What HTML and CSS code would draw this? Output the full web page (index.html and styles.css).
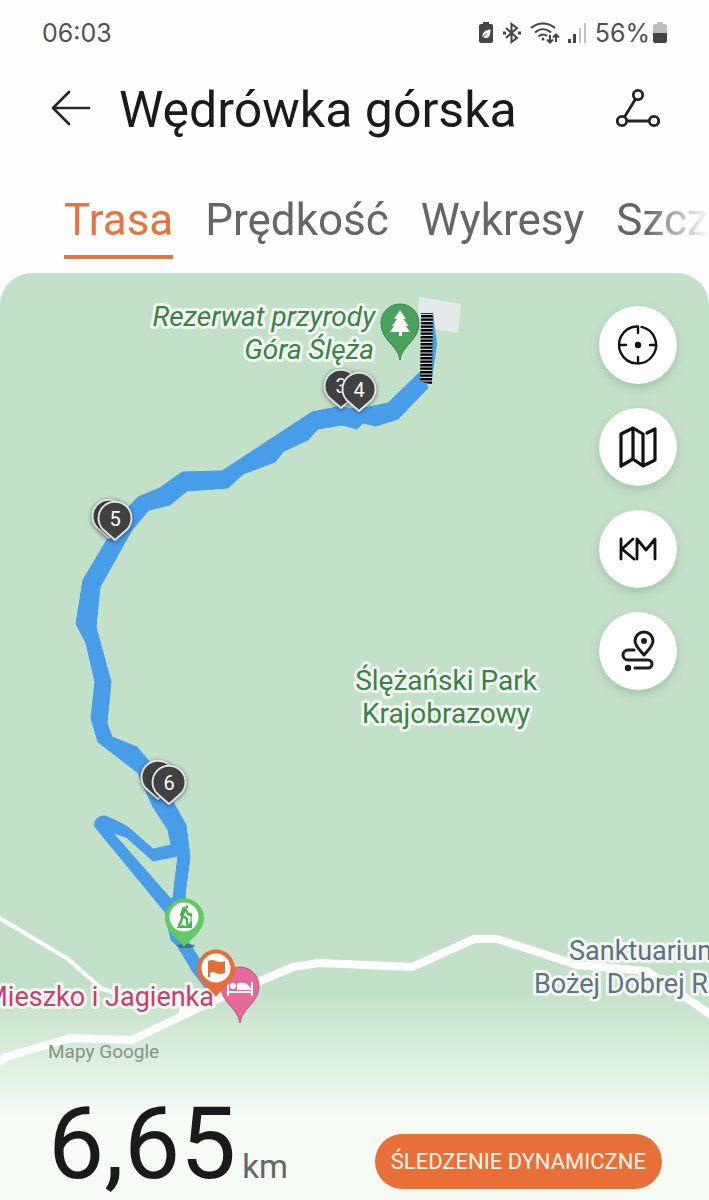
FILE: index.html
```
<!DOCTYPE html>
<html lang="pl">
<head>
    <meta charset="UTF-8">
    <meta name="viewport" content="width=device-width, initial-scale=1">
    <title>Wędrówka górska</title>
    <link rel="stylesheet" href="styles.css">
</head>
<body>
<div class="status">
    <span class="time">06:03</span>
    <div class="status-icons">
        <svg width="16" height="22" viewBox="0 0 16 22">
            <path fill="#444" d="M5 0h6v2h2a2 2 0 0 1 2 2v15a2 2 0 0 1-2 2H3a2 2 0 0 1-2-2V4a2 2 0 0 1 2-2h2z"/>
            <path fill="#fff" d="M12.500 7.500c0 6-1.500 8.500-5 8.500-1.500 0-2.500-.5-3-1.200-.5-3.800 2-6.800 8-7.300z"/>
            <path fill="none" stroke="#444" d="M3.500 16.500l5.500-5"/>
        </svg>
        <svg width="20" height="22" viewBox="0 0 20 22" fill="none" stroke="#444" stroke-width="2">
            <path d="M4 6l11 10-5.500 4V2L15 6 4 16"/>
            <path stroke-width="3" d="M1 11h3M16 11h3"/>
        </svg>
        <svg width="30" height="22" viewBox="0 0 30 22" fill="none" stroke="#444" stroke-width="2">
            <path d="M1 6c7-6 17-6 24 0M5 10.500c5-4.500 11-4.500 16 0M8.500 14.500c3-2.500 6-2.500 8.500-.5"/>
            <circle cx="13" cy="17" r="1.500" fill="#444" stroke="none"/>
            <path d="M20 13v7M17 17.500l3 3 3-3M26 20v-7M23 15.500l3-3 3 3"/>
        </svg>
        <svg width="19" height="22" viewBox="0 0 19 22">
            <path fill="#444" d="M0 17h3v4H0zM5 12h3v9H5z"/>
            <path fill="#c4c4c4" d="M11 6h2v15h-2zM16 1h2v20h-2z"/>
        </svg>
        <span class="percent">56%</span>
        <svg width="16" height="22" viewBox="0 0 16 22">
            <path fill="#bdbdbd" d="M5 0h6v2h2a2 2 0 0 1 2 2v7H1V4a2 2 0 0 1 2-2h2z"/>
            <path fill="#444" d="M1 11h14v8a2 2 0 0 1-2 2H3a2 2 0 0 1-2-2z"/>
        </svg>
    </div>
</div>

<header class="header">
    <button class="icon-btn" type="button" aria-label="Wstecz">
        <svg width="40" height="38" viewBox="0 0 40 38" fill="none" stroke="#262626" stroke-width="2.600" stroke-linecap="round" stroke-linejoin="round">
            <path d="M18 3L2 19l16 16M2 19h36"/>
        </svg>
    </button>
    <h1>Wędrówka górska</h1>
    <button class="icon-btn" type="button" aria-label="Udostępnij">
        <svg width="44" height="40" viewBox="0 0 44 40" fill="none" stroke="#222" stroke-width="2.800">
            <circle cx="22" cy="7" r="4.700"/>
            <circle cx="6" cy="33" r="4.700"/>
            <circle cx="38" cy="33" r="4.700"/>
            <path d="M19.500 11L8.500 29M11 33h22"/>
        </svg>
    </button>
</header>

<nav class="tabs">
    <a href="#trasa" class="active">Trasa</a>
    <a href="#predkosc">Prędkość</a>
    <a href="#wykresy">Wykresy</a>
    <a href="#szczegoly">Szczegóły</a>
</nav>

<main class="map" id="trasa">
    <svg class="map-canvas" viewBox="0 273 709 927" preserveAspectRatio="xMidYMin slice">
        <defs>
            <linearGradient id="fade" x1="0" y1="0" x2="0" y2="1">
                <stop offset="0" stop-color="#f6fbf6" stop-opacity="0"/>
                <stop offset=".45" stop-color="#f6fbf6" stop-opacity=".4"/>
                <stop offset="1" stop-color="#f6fbf6"/>
            </linearGradient>
            <pattern id="hatch" width="14" height="3.500" patternUnits="userSpaceOnUse">
                <path fill="#000" d="M0 0h14v2.500H0z"/>
                <path fill="#dfe6ee" d="M0 2.500h14v1H0z"/>
            </pattern>
            <path id="km-pin" d="M0 22L-12 11.500A16.500 16.500 0 1 1 12 11.500z"/>
        </defs>

        <!-- drogi -->
        <g fill="none" stroke="#fff" stroke-linejoin="round">
            <path stroke-width="4" d="M-4 916L68 959l34 30 14 4"/>
            <path stroke-width="8" d="M-6 1066l12-9 64-19 62 2 81-39 80-34 26-4 93 4 62-28h23l80 26 70 6 70 48"/>
        </g>
        <path fill="#fff" d="M179 1006l16-3v6l-16 5z"/>
        <path fill="url(#fade)" d="M-700 992h2100v125H-700z"/>
        <path fill="#f6fbf6" d="M-700 1117h2100v900H-700z"/>

        <path fill="#e4e9e9" d="M419 297l42 7-3 29-41-7z"/>

        <!-- trasa -->
        <g fill="#489de8">
            <path fill-rule="evenodd" stroke="#489de8" stroke-linejoin="round" d="M421 371L388 403 359 409 337 407 312 412 222 471 182 472 160 488 138 497 123 513 105 543 83 580 76 624 86 643 95 682 91 718 98 742 138 773 153 807 168 830 171 845 153 849 128 827Q108 816 104 816Q93 817 95 827L165 912 171 940 178 947 193 972 206 989 216 985 188 941 185 895 190 857 186 825 172 800 148 760 137 747 112 737 107 723 111 682 96 627 100 587 132 530 149 510 170 505 187 491 228 488 243 474 275 462 284 451 308 440 318 429 342 425 357 429 363 423 376 426 398 419 428 388zM113 833L126 837 153 861 178 856 173 897 171 899z"/>
            <path d="M433 312l4 32-5 36h-6z"/>
        </g>
        <path fill="url(#hatch)" d="M421 313h12l-1 72-12-4z"/>

        <g class="place">
            <text class="green italic" x="375" y="326" text-anchor="end">Rezerwat przyrody</text>
            <text class="green italic" x="374" y="359" text-anchor="end">Góra Ślęża</text>
            <text class="green" x="446" y="690" text-anchor="middle">Ślężański Park</text>
            <text class="green" x="446" y="723" text-anchor="middle">Krajobrazowy</text>
            <text class="slate" x="569" y="960">Sanktuarium Matki</text>
            <text class="slate" x="534" y="993">Bożej Dobrej Rady</text>
            <text class="pink" x="214" y="1006" text-anchor="end">Mieszko i Jagienka</text>
        </g>

        <!-- rezerwat -->
        <path fill="#49a35a" stroke="#35854a" d="M400 360C398 345 381 341 381 323a19 19 0 0 1 38 0c0 18-17 22-19 37z"/>
        <path fill="#fff" d="M400 310l6 9h-2.500l5 7H406l4 6h-8v4h-3v-4h-9l4-6h-2l5-7h-3z"/>

        <!-- kilometry -->
        <g class="km-pins">
            <g transform="translate(341 386)"><use href="#km-pin"/><text y="7">3</text></g>
            <g transform="translate(359 389)"><use href="#km-pin"/><text y="8">4</text></g>
            <g transform="translate(109 516)"><use href="#km-pin"/></g>
            <g transform="translate(115 518)"><use href="#km-pin"/><text y="8">5</text></g>
            <g transform="translate(158 777)"><use href="#km-pin"/></g>
            <g transform="translate(169 782)"><use href="#km-pin"/><text y="8">6</text></g>
        </g>

        <!-- nocleg -->
        <path fill="#e46a9b" stroke="#c65284" d="M240 1023c-2-15-19-20-19-37a19 19 0 0 1 38 0c0 17-17 22-19 37z"/>
        <path fill="#fff" d="M227 981h2v10h22v-9h2v14h-2v-3h-22v3h-2zM237 990v-6c6-3 13 0 14 6z"/>
        <circle cx="233" cy="986" r="3" fill="#fff"/>

        <!-- start -->
        <ellipse cx="186" cy="946" rx="9" ry="2" fill="#315f65" opacity=".7"/>
        <path fill="#62c963" d="M184 947c-5-8-19-15-19-29a19.500 19.500 0 0 1 39 0c0 14-14 21-20 29z"/>
        <circle cx="184" cy="917" r="14.500" fill="#fff"/>
        <g fill="none" stroke="#43b649" stroke-width="2.400" stroke-linecap="round" stroke-linejoin="round">
            <circle cx="187" cy="907" r="1.400" fill="#43b649" stroke="none"/>
            <path stroke-width="4" d="M184 909l-2 6"/>
            <path d="M186 910l2 4 3 1M183 916l4 3v5M182 917l-1 5-2 3"/>
            <path stroke-width="1.200" d="M191 913v9"/>
        </g>
        <path fill="#43b649" d="M177 927l5-2 4 1 6-5v7h-15z"/>

        <!-- meta -->
        <path fill="#e66e36" d="M216 997c-5-8-19-15-19-28a19 19.500 0 0 1 38 0c0 13-14 20-19 28z"/>
        <circle cx="216" cy="968" r="14.500" fill="#fff"/>
        <path fill="#e66e36" d="M208 961q4-2 8 0t9 0v12q-5 2-9 0t-6 0v4h-2z"/>
    </svg>

    <div class="tools">
        <button type="button" aria-label="Wyśrodkuj">
            <svg width="40" height="40" viewBox="0 0 40 40" fill="none" stroke="#111" stroke-width="2.400" stroke-linecap="round">
                <path d="M18.500 1.500a18.500 18.500 0 1 0 5 .4M20 1.500V8M20 32v6M2 20h6M32 20h6"/>
                <circle cx="20" cy="20" r="3.200" fill="#111" stroke="none"/>
            </svg>
        </button>
        <button type="button" aria-label="Typ mapy">
            <svg width="40" height="44" viewBox="0 0 40 44" fill="none" stroke="#111" stroke-width="3.200" stroke-linecap="round" stroke-linejoin="round">
                <path d="M29 8l8-4v31l-12 6-10-7-12 7V9l12-6 10 6v32M15 3v31"/>
            </svg>
        </button>
        <button type="button" class="unit" aria-label="Kilometry">
            <svg width="40" height="24" viewBox="0 0 40 24" fill="none" stroke="#111" stroke-width="2.800" stroke-linecap="round" stroke-linejoin="round">
                <path d="M3 2v20M15 2L4 12l12 10M19 22V2l9 11 9-11v20"/>
            </svg>
        </button>
        <button type="button" aria-label="Przebieg trasy">
            <svg width="40" height="44" viewBox="0 0 40 44" fill="none" stroke="#1d1d1d" stroke-width="3" stroke-linecap="round" stroke-linejoin="round">
                <path d="M26 26c-4-5-9-9-9-14a9 9 0 0 1 18 0c0 5-5 9-9 14zM16 21H10a5 5 0 0 0 0 10h20a4 4 0 0 1 0 8H17"/>
                <circle cx="26" cy="12" r="3" fill="#1d1d1d" stroke="none"/>
                <circle cx="10" cy="39" r="3.200" fill="#1d1d1d" stroke="none"/>
            </svg>
        </button>
    </div>

    <div class="summary">
        <p class="credit">Mapy Google</p>
        <div class="row">
            <p class="distance">6,65<span>km</span></p>
            <button type="button" class="track">ŚLEDZENIE DYNAMICZNE</button>
        </div>
    </div>
</main>
</body>
</html>
```
FILE: styles.css
```
* {
    margin: 0;
    padding: 0;
    box-sizing: border-box;
}
body {
    display: flex;
    flex-direction: column;
    min-height: 100vh;
    background-color: #fefefe;
    color: #1a1a1a;
    font-family: Roboto, "Liberation Sans", sans-serif;
    overflow-x: hidden;
}
button {
    border: 0;
    background: none;
    font-family: inherit;
    cursor: pointer;
}
svg {
    display: block;
}

.status {
    display: flex;
    justify-content: space-between;
    align-items: center;
    height: 66px;
    padding: 0 41px 0 42px;
    color: #505050;
    font-family: Inter, Roboto, sans-serif;
    font-size: 25px;
}
.status-icons {
    display: flex;
    align-items: center;
    gap: 8px;
}
.percent {
    margin-right: -6px;
}

.header {
    display: flex;
    align-items: center;
    height: 84px;
    padding: 0 49px 0 51px;
}
.header h1 {
    flex: 1;
    margin-left: 28px;
    padding-top: 4px;
    font-size: 50px;
    font-weight: 400;
    line-height: 60px;
}

.tabs {
    display: flex;
    gap: 32px;
    height: 123px;
    padding: 41px 0 0 64px;
    overflow: hidden;
    -webkit-mask-image: linear-gradient(to left, transparent, #000 64px);
    mask-image: linear-gradient(to left, transparent, #000 64px);
}
.tabs a {
    height: 68px;
    color: #666;
    font-size: 44px;
    line-height: 58px;
    text-decoration: none;
    white-space: nowrap;
}
.tabs .active {
    color: #e8733c;
    background: linear-gradient(#e8733c, #e8733c) bottom / 100% 4px no-repeat;
}

.map {
    position: relative;
    display: flex;
    flex: 1;
    flex-direction: column;
    justify-content: space-between;
    border-radius: 32px 32px 0 0;
    background-color: #c3e1c8;
    overflow: hidden;
}
.map-canvas {
    position: absolute;
    top: 0;
    left: 0;
    width: 100%;
    height: 100%;
}
.place text {
    font-size: 27px;
    stroke: #f0f8f1;
    stroke-width: 6px;
    stroke-linejoin: round;
    paint-order: stroke;
}
.place .green {
    fill: #3e8148;
    font-size: 28px;
}
.place .italic {
    font-style: italic;
}
.place .slate {
    fill: #5f7184;
}
.place .pink {
    fill: #cb3d72;
}
.km-pins use {
    fill: #404242;
    stroke: #e3e3e3;
    stroke-width: 2px;
    stroke-linejoin: round;
    filter: drop-shadow(0 1px 2px rgba(0, 0, 0, .5));
}
.km-pins text {
    fill: #fff;
    font-size: 20px;
    text-anchor: middle;
}

.tools {
    position: relative;
    display: flex;
    flex-direction: column;
    gap: 24px;
    align-self: flex-end;
    margin: 33px 32px 0 0;
}
.tools button {
    display: flex;
    align-items: center;
    justify-content: center;
    width: 78px;
    height: 78px;
    border-radius: 50%;
    background-color: #fff;
    box-shadow: 0 4px 10px rgba(60, 110, 70, .25);
}

.summary {
    position: relative;
    padding: 0 47px 0 48px;
}
.credit {
    color: #839487;
    font-size: 19px;
    line-height: 24px;
}
.row {
    display: flex;
    justify-content: space-between;
    align-items: flex-end;
    height: 136px;
    padding-bottom: 11px;
}
.distance {
    font-size: 100px;
    line-height: 90px;
}
.distance span {
    margin-left: 6px;
    color: #666;
    font-size: 33px;
    line-height: 33px;
}
.track {
    height: 55px;
    padding: 0 16px;
    border-radius: 28px;
    background-color: #e86f37;
    color: #fff5ea;
    font-size: 22px;
    white-space: nowrap;
}
```
